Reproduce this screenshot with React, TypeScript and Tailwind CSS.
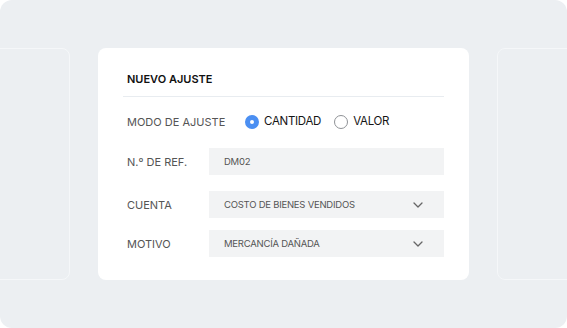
const fields = [
  { label: 'N.º DE REF.', value: 'DM02', select: false, mt: 'mt-[18px]' },
  { label: 'CUENTA', value: 'COSTO DE BIENES VENDIDOS', select: true, mt: 'mt-[16px]' },
  { label: 'MOTIVO', value: 'MERCANCÍA DAÑADA', select: true, mt: 'mt-[12px]' },
]

function Radio({ checked, label }: { checked: boolean; label: string }) {
  return (
    <div className="flex items-center gap-[5px]">
      {checked ? (
        <span className="h-[14px] w-[14px] rounded-full border-[5px] border-[#4b8ff2] bg-white" />
      ) : (
        <span className="h-[14px] w-[14px] rounded-full border border-[#8f9296] bg-white" />
      )}
      <span className="text-[11.5px] tracking-tight text-[#151515]">{label}</span>
    </div>
  )
}

function Chevron() {
  return (
    <svg width="10" height="6" viewBox="0 0 10 6" fill="none" className="text-[#666]">
      <path d="M1 1l4 4 4-4" stroke="currentColor" strokeWidth="1.3" strokeLinecap="round" strokeLinejoin="round" />
    </svg>
  )
}

export default function App() {
  return (
    <div className="h-[328px] w-[567px] bg-white font-['Inter',sans-serif]">
      <div className="flex h-full w-full justify-center gap-[28px] overflow-hidden rounded-[12px] bg-[#eceff2] pt-[48px]">
        <div className="h-[232px] w-[371px] shrink-0 rounded-[8px] border border-[#f5f7f9]" />

        <div className="h-[232px] w-[371px] shrink-0 rounded-[8px] bg-white px-[25px]">
          <div className="pl-[4px] pt-[23px] text-[11px] font-semibold leading-[16px] text-[#111]">
            NUEVO AJUSTE
          </div>
          <div className="mt-[9px] h-px bg-[#e8ecf0]" />

          <div className="mt-[16px] flex items-center pl-[4px]">
            <span className="w-[118px] text-[11px] leading-[16px] text-[#555]">MODO DE AJUSTE</span>
            <div className="flex items-center gap-[13px]">
              <Radio checked label="CANTIDAD" />
              <Radio checked={false} label="VALOR" />
            </div>
          </div>

          {fields.map((f) => (
            <div key={f.label} className={`${f.mt} flex items-center pl-[4px]`}>
              <span className="w-[82px] text-[11px] text-[#555]">{f.label}</span>
              <div className="flex h-[27px] flex-1 items-center justify-between bg-[#f2f3f4] pl-[15px] pr-[21px]">
                <span className="text-[9.5px] tracking-tight text-[#555]">{f.value}</span>
                {f.select && <Chevron />}
              </div>
            </div>
          ))}
        </div>

        <div className="h-[232px] w-[371px] shrink-0 rounded-[8px] border border-[#f5f7f9]" />
      </div>
    </div>
  )
}
